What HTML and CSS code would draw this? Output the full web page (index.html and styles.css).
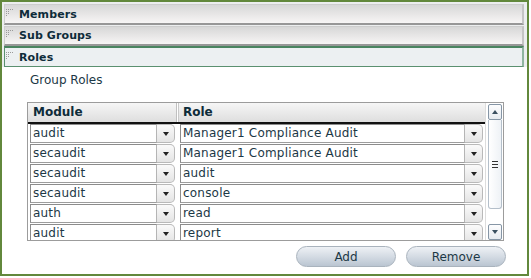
FILE: index.html
```html
<!DOCTYPE html>
<html>
<head>
<meta charset="utf-8">
<link rel="stylesheet" href="styles.css">
</head>
<body>
<div class="frame">
  <div class="bar bar-first">
    <svg class="grip" width="9" height="9" viewBox="0 0 9 9"><g fill="#9a9a9a"><rect x="0" y="0" width="1" height="1"/><rect x="2" y="0" width="1" height="1"/><rect x="4" y="0" width="1" height="1"/><rect x="6" y="0" width="1" height="1"/><rect x="0" y="2" width="1" height="1"/><rect x="2" y="2" width="1" height="1"/><rect x="0" y="4" width="1" height="1"/><rect x="2" y="4" width="1" height="1"/><rect x="0" y="6" width="1" height="1"/></g></svg>
    <span class="bar-title">Members</span>
  </div>
  <div class="bar bar-second">
    <svg class="grip" width="9" height="9" viewBox="0 0 9 9"><g fill="#9a9a9a"><rect x="0" y="0" width="1" height="1"/><rect x="2" y="0" width="1" height="1"/><rect x="4" y="0" width="1" height="1"/><rect x="6" y="0" width="1" height="1"/><rect x="0" y="2" width="1" height="1"/><rect x="2" y="2" width="1" height="1"/><rect x="0" y="4" width="1" height="1"/><rect x="2" y="4" width="1" height="1"/><rect x="0" y="6" width="1" height="1"/></g></svg>
    <span class="bar-title">Sub Groups</span>
  </div>
  <div class="bar bar-active">
    <svg class="grip" width="9" height="9" viewBox="0 0 9 9"><g fill="#9a9a9a"><rect x="0" y="0" width="1" height="1"/><rect x="2" y="0" width="1" height="1"/><rect x="4" y="0" width="1" height="1"/><rect x="6" y="0" width="1" height="1"/><rect x="0" y="2" width="1" height="1"/><rect x="2" y="2" width="1" height="1"/><rect x="0" y="4" width="1" height="1"/><rect x="2" y="4" width="1" height="1"/><rect x="0" y="6" width="1" height="1"/></g></svg>
    <span class="bar-title">Roles</span>
  </div>
  <div class="content">
    <div class="label">Group Roles</div>
    <div class="table">
      <div class="table-main">
        <div class="thead">
          <div class="th th-module">Module</div>
          <div class="th th-role">Role</div>
        </div>
        <div class="tbody">
          <div class="row">
            <div class="field">audit</div><div class="arrow"><span class="tri"></span></div>
            <div class="field field-role">Manager1 Compliance Audit</div><div class="arrow"><span class="tri"></span></div>
          </div>
          <div class="row">
            <div class="field">secaudit</div><div class="arrow"><span class="tri"></span></div>
            <div class="field field-role">Manager1 Compliance Audit</div><div class="arrow"><span class="tri"></span></div>
          </div>
          <div class="row">
            <div class="field">secaudit</div><div class="arrow"><span class="tri"></span></div>
            <div class="field field-role">audit</div><div class="arrow"><span class="tri"></span></div>
          </div>
          <div class="row">
            <div class="field">secaudit</div><div class="arrow"><span class="tri"></span></div>
            <div class="field field-role">console</div><div class="arrow"><span class="tri"></span></div>
          </div>
          <div class="row">
            <div class="field">auth</div><div class="arrow"><span class="tri"></span></div>
            <div class="field field-role">read</div><div class="arrow"><span class="tri"></span></div>
          </div>
          <div class="row">
            <div class="field">audit</div><div class="arrow"><span class="tri"></span></div>
            <div class="field field-role">report</div><div class="arrow"><span class="tri"></span></div>
          </div>
        </div>
      </div>
      <div class="scrollbar">
        <div class="sb-btn"><span class="sb-up"></span></div>
        <div class="sb-track">
          <div class="sb-thumb">
            <svg width="6" height="7" viewBox="0 0 6 7"><g fill="#333"><rect x="0" y="0" width="6" height="1"/><rect x="0" y="3" width="6" height="1"/><rect x="0" y="6" width="6" height="1"/></g></svg>
          </div>
        </div>
        <div class="sb-btn"><span class="sb-down"></span></div>
      </div>
    </div>
    <div class="actions">
      <button class="pill">Add</button>
      <button class="pill">Remove</button>
    </div>
  </div>
</div>
</body>
</html>
```

FILE: styles.css
```css
* { box-sizing: border-box; }
body {
  margin: 0;
  background: #ffffff;
  font-family: "DejaVu Sans", sans-serif;
  color: #1c3846;
}
.frame {
  width: 529px;
  height: 276px;
  border: 2px solid #62883c;
  background: #eceeef;
  padding: 2px 3px 0 2px;
  display: flex;
  flex-direction: column;
}
.bar {
  flex-shrink: 0;
  height: 21px;
  display: flex;
  align-items: center;
  border: 1px solid #cdcdcd;
  border-bottom: 2px solid #979797;
  border-right: 2px solid #c4c4c4;
  background: linear-gradient(#d7d7d7, #f7f5f5);
  padding-left: 1px;
}
.bar-first { margin-bottom: 1px; }
.bar-second { height: 20px; }
.bar-active {
  background: #ecf0f2;
  border: 1px solid #5a9070;
  border-top: 2px solid #4a8460;
  border-right: 2px solid #8fb4a0;
}
.grip { margin-right: 4px; margin-top: -2px; }
.bar-title {
  font-weight: bold;
  font-size: 11px;
  color: #0e2c3a;
  letter-spacing: 0.1px;
}
.content {
  flex: 1;
  background: #ffffff;
  margin: 0 -3px 0 -2px;
  padding: 6px 0 0 0;
  display: flex;
  flex-direction: column;
}
.label {
  font-size: 12px;
  line-height: 15px;
  margin-left: 28px;
  color: #1c3846;
}
.table {
  flex-shrink: 0;
  margin: 14px 0 0 25px;
  width: 477px;
  height: 139px;
  border: 1px solid #9c9c9c;
  display: flex;
}
.table-main {
  width: 457px;
  display: flex;
  flex-direction: column;
}
.thead {
  flex-shrink: 0;
  height: 21px;
  display: flex;
  border-bottom: 2px solid #111;
  background: linear-gradient(#f6f6f6, #dedede);
}
.th {
  font-weight: bold;
  font-size: 12px;
  color: #0e2c3a;
  padding-left: 5px;
  line-height: 18px;
}
.th-module {
  width: 149px;
  border-right: 1px solid #c0c0c0;
  box-shadow: 1px 0 0 #ffffff, 2px 0 0 #c8c8c8;
}
.th-role { flex: 1; padding-left: 6px; }
.tbody {
  flex: 1;
  overflow: hidden;
}
.row {
  display: grid;
  grid-template-columns: 127px 18px 290px 18px;
  height: 19px;
  margin: 0 0 1px 2px;
}
.field {
  border: 1px solid #8c8c8c;
  border-right-color: #b5b5b5;
  border-bottom-color: #9d9d9d;
  background: #fff;
  font-size: 12px;
  line-height: 17px;
  padding-left: 2px;
  white-space: nowrap;
  overflow: hidden;
  color: #1c3846;
  letter-spacing: 0.2px;
}
.field-role { margin-left: 5px; width: 285px; }
.arrow {
  border: 1px solid #b9b9b9;
  border-left: none;
  border-radius: 0 5px 5px 0;
  background: linear-gradient(#fafafa, #e4e4e4);
  display: flex;
  align-items: center;
  justify-content: center;
}
.tri {
  width: 0; height: 0;
  border-left: 3px solid transparent;
  border-right: 3px solid transparent;
  border-top: 4px solid #222;
  margin-top: 1px;
}
.scrollbar {
  width: 18px;
  display: flex;
  flex-direction: column;
  padding: 1px 1px 1px 2px;
  background: #ffffff;
  border-left: 1px solid #dddddd;
}
.sb-btn {
  flex-shrink: 0;
  height: 16px;
  border: 1px solid #8696a6;
  border-radius: 2px;
  background: linear-gradient(#fdfdfe, #e6ebf0);
  display: flex;
  align-items: center;
  justify-content: center;
}
.sb-up {
  width: 0; height: 0;
  border-left: 3px solid transparent;
  border-right: 3px solid transparent;
  border-bottom: 4px solid #3a5060;
}
.sb-down {
  width: 0; height: 0;
  border-left: 3px solid transparent;
  border-right: 3px solid transparent;
  border-top: 4px solid #3a5060;
}
.sb-track { flex: 1; padding-bottom: 15px; }
.sb-thumb {
  height: 89px;
  border: 1px solid #b4bfca;
  border-top: none;
  border-radius: 0 0 3px 3px;
  background: linear-gradient(90deg, #ffffff, #eef2f6);
  display: flex;
  align-items: center;
  justify-content: center;
}
.actions {
  display: flex;
  justify-content: flex-end;
  gap: 10px;
  margin: 5px 21px 0 0;
}
.pill {
  width: 100px;
  height: 21px;
  border: 1px solid #a9b3bd;
  border-radius: 11px;
  background: linear-gradient(#eef1f5, #cfd7e0 60%, #bac5d1);
  font-family: "DejaVu Sans", sans-serif;
  font-size: 12px;
  color: #1c3846;
  padding: 0;
  line-height: 18px;
}
```
